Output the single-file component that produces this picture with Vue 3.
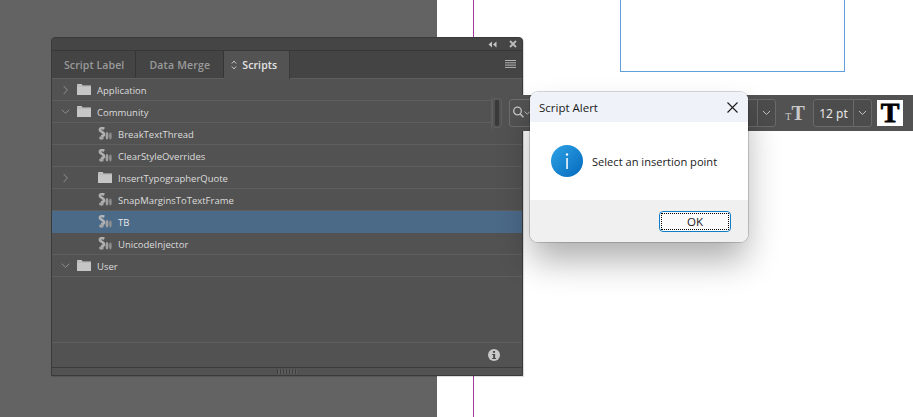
<script setup>
const rows = [
  { label: 'Application', kind: 'folder', depth: 0, caret: 'right' },
  { label: 'Community', kind: 'folder', depth: 0, caret: 'down' },
  { label: 'BreakTextThread', kind: 'script', depth: 1 },
  { label: 'ClearStyleOverrides', kind: 'script', depth: 1 },
  { label: 'InsertTypographerQuote', kind: 'folder', depth: 1, caret: 'right' },
  { label: 'SnapMarginsToTextFrame', kind: 'script', depth: 1 },
  { label: 'TB', kind: 'script', depth: 1, selected: true },
  { label: 'UnicodeInjector', kind: 'script', depth: 1 },
  { label: 'User', kind: 'folder', depth: 0, caret: 'down' }
]
</script>

<template>
  <div class="desk">
    <div class="pasteboard"></div>
    <div class="page">
      <div class="guide"></div>
      <div class="frame"></div>
    </div>

    <section class="panel">
      <header class="titlebar">
        <svg width="9" height="7" viewBox="0 0 9 7"><path d="M4 .5v6L.5 3.500zM8.500 .5v6L5 3.500z" fill="#c4c4c4"/></svg>
        <svg class="close" width="8" height="8" viewBox="0 0 8 8"><path d="M1 1l6 6M7 1L1 7" stroke="#bcbcbc" stroke-width="1.800"/></svg>
      </header>
      <nav class="tabs">
        <div class="tab one">Script Label</div>
        <div class="tab two">Data Merge</div>
        <div class="tab active">
          <svg width="6" height="10" viewBox="0 0 6 10"><path d="M.8 3.600L3 1l2.200 2.600M.8 6.400L3 9l2.200-2.600" fill="none" stroke="#cfcfcf" stroke-width=".9"/></svg>
          Scripts
        </div>
        <svg class="menu" width="11" height="8" viewBox="0 0 11 8"><path d="M0 .5h11M0 2.800h11M0 5.100h11M0 7.400h11" stroke="#b4b4b4"/></svg>
      </nav>
      <div class="list">
        <div v-for="r in rows" :key="r.label" class="row" :class="{ selected: r.selected, nested: r.depth }">
          <span class="caret">
            <svg v-if="r.caret === 'right'" width="5" height="10" viewBox="0 0 5 10"><path d="M.7 1l3.600 4-3.600 4" fill="none" stroke="#8f8f8f"/></svg>
            <svg v-else-if="r.caret === 'down'" width="9" height="5" viewBox="0 0 9 5"><path d="M.7.7l3.800 3.600L8.300.7" fill="none" stroke="#8f8f8f"/></svg>
          </span>
          <svg v-if="r.kind === 'folder'" class="ico" width="14" height="11" viewBox="0 0 14 11"><path d="M0 1.200C0 .5.4 0 1 0h3.600l1 1.400H14V11H0z" fill="#c6c6c6"/><path d="M0 2.100h14" stroke="#a4a4a4" stroke-width=".6"/></svg>
          <svg v-else class="ico" width="14" height="13" viewBox="0 0 14 13"><path d="M6.400 1.600C3.800.6 1.600 1.200 1.900 3c.4 2 4.100 2 4.100 4.200 0 1.500-1.700 2-2.900 2.200" fill="none" stroke="#b8b8b8" stroke-width="2.600" opacity=".92"/><ellipse cx="3.400" cy="11" rx="2.400" ry="1.700" fill="#a6a6a6"/><ellipse cx="9" cy="8.700" rx="1.400" ry="3.700" fill="#a2a2a2"/><ellipse cx="12.400" cy="9" rx="1.300" ry="3.400" fill="#8f8f8f"/></svg>
          <span class="label">{{ r.label }}</span>
        </div>
      </div>
      <footer class="foot">
        <svg width="12" height="12" viewBox="0 0 12 12"><circle cx="6" cy="6" r="6" fill="#c8c8c8"/><rect x="5" y="2" width="2" height="1.800" fill="#4a4a4a"/><path d="M4.200 5h2.900v4h1v1H4.200V9h1V6h-1z" fill="#4a4a4a"/></svg>
      </footer>
      <div class="resize"><div class="dots"></div></div>
    </section>

    <div class="toolbar">
      <div class="grip-wrap"><div class="grip"></div></div>
      <div class="search">
        <svg width="20" height="16" viewBox="0 0 20 16"><circle cx="5.500" cy="6" r="3.800" fill="none" stroke="#c8c8c8" stroke-width="1.300"/><path d="M8 8.800l3.400 3.400" stroke="#c8c8c8" stroke-width="1.600"/><path d="M12.500 6.500l2.800 2.600 2.800-2.600" fill="none" stroke="#bdbdbd" stroke-width="1"/></svg>
      </div>
      <div class="spacer"></div>
      <div class="combo first"><span class="chev"><svg width="9" height="6" viewBox="0 0 9 6"><path d="M1 1l3.500 3.500L8 1" fill="none" stroke="#c4c4c4"/></svg></span></div>
      <div class="tt"><span class="small-t">T</span><span class="big-t">T</span></div>
      <div class="combo size"><span class="val">12 pt</span><span class="chev"><svg width="9" height="6" viewBox="0 0 9 6"><path d="M1 1l3.500 3.500L8 1" fill="none" stroke="#c4c4c4"/></svg></span></div>
      <div class="swatch">T</div>
    </div>

    <section class="dialog">
      <header class="dlg-title">
        <span>Script Alert</span>
        <svg width="11" height="11" viewBox="0 0 11 11"><path d="M.5.5l10 10M10.500.5l-10 10" stroke="#1c1c1c" stroke-width="1.100"/></svg>
      </header>
      <div class="dlg-body">
        <svg width="32" height="32" viewBox="0 0 32 32">
          <defs><linearGradient id="ig" x1="0" y1="0" x2="1" y2="1"><stop offset="0" stop-color="#2ea3e6"/><stop offset="1" stop-color="#0569bd"/></linearGradient></defs>
          <circle cx="16" cy="16" r="16" fill="url(#ig)"/>
          <rect x="15.300" y="13" width="1.500" height="11" fill="#fff"/>
          <circle cx="16" cy="9.500" r="1.200" fill="#fff"/>
        </svg>
        <span class="msg">Select an insertion point</span>
      </div>
      <footer class="dlg-foot">
        <div class="ok"><span class="ok-inner">OK</span></div>
      </footer>
    </section>
  </div>
</template>

<style>
html, body { margin: 0; background: #fff; overflow: hidden; }
</style>

<style scoped>
.desk { position: relative; width: 913px; height: 417px; overflow: hidden; display: flex; background: #fff; font-family: "Open Sans", "Noto Sans", sans-serif; }
.pasteboard { width: 437px; background: #636363; }
.page { flex: 1; position: relative; background: #fff; }
.guide { position: absolute; left: 36px; top: 0; bottom: 0; width: 1px; background: #a03a9c; }
.frame { position: absolute; left: 183px; top: -10px; width: 223px; height: 80px; border: 1px solid #5f9fdc; }

.toolbar { position: absolute; left: 491px; top: 95px; width: 422px; height: 36px; box-sizing: border-box; background: #525252; display: flex; align-items: center; border-radius: 4px 0 0 4px; box-shadow: inset 1px 0 0 #5c5c5c; }
.grip-wrap { width: 10px; height: 30px; margin-left: 1px; display: flex; justify-content: center; align-items: center; border: 1px solid #5f5f5f; border-radius: 3px; box-sizing: border-box; }
.grip { width: 4px; height: 26px; background: #393939; border-radius: 2px; }
.search { margin-left: 7px; width: 28px; height: 28px; border: 1px solid #6e6e6e; border-radius: 3px; box-sizing: border-box; display: flex; align-items: center; padding-left: 2px; }
.spacer { flex: 1; }
.combo { height: 28px; border: 1px solid #6a6a6a; border-radius: 3px; box-sizing: border-box; display: flex; align-items: center; background: #4c4c4c; }
.combo.first { width: 32px; justify-content: flex-end; margin-right: 9px; }
.chev { width: 18px; height: 100%; border-left: 1px solid #6a6a6a; display: flex; align-items: center; justify-content: center; box-sizing: border-box; }
.tt { width: 20px; display: flex; align-items: flex-end; justify-content: center; font-family: "Liberation Serif", serif; color: #c9c9c9; line-height: 1; margin-right: 8px; }
.small-t { font-size: 10px; margin-bottom: 1px; }
.big-t { font-size: 20px; font-weight: 700; }
.combo.size { width: 59px; margin-right: 5px; }
.val { flex: 1; text-align: center; color: #e6e6e6; font-size: 12px; font-family: "Noto Sans", sans-serif; }
.swatch { width: 26px; height: 26px; margin-right: 10px; background: #fff; color: #000; font: 900 28px/26px "Liberation Serif", serif; text-align: center; -webkit-text-stroke: .8px #000; }

.panel { position: absolute; left: 51px; top: 37px; width: 472px; height: 339px; box-sizing: border-box; background: #525252; border: 1px solid #3a3a3a; border-radius: 4px 4px 0 0; display: flex; flex-direction: column; box-shadow: 1px 1px 1px rgba(0,0,0,.15); }
.titlebar { height: 13px; flex: none; box-sizing: border-box; background: #454545; border-bottom: 1px solid #383838; display: flex; align-items: center; justify-content: flex-end; gap: 12px; padding-right: 5px; border-radius: 3px 3px 0 0; }
.tabs { height: 28px; flex: none; background: #444; display: flex; align-items: stretch; position: relative; border-bottom: 1px solid #5e5e5e; box-sizing: border-box; }
.tab { display: flex; align-items: center; gap: 5px; font-size: 10.500px; font-weight: 600; color: #9a9a9a; border-right: 1px solid #363636; letter-spacing: .1px; }
.tab.one { padding: 0 11px 0 12px; }
.tab.two { padding: 0 13px 0 13px; letter-spacing: .2px; }
.tab.active { background: #535353; color: #e4e4e4; padding: 0 12px 0 7px; border-right: 1px solid #3a3a3a; margin-bottom: -1px; }
.menu { position: absolute; right: 6px; top: 9px; }
.list { flex: 1; }
.row { height: 22px; display: flex; align-items: center; box-sizing: border-box; border-bottom: 1px solid #5e5e5e; color: #dcdcdc; font-size: 9.500px; }
.row.selected { background: #4b6a88; color: #e8e8e8; border-bottom-color: #4b6a88; }
.caret { width: 25px; flex: none; display: flex; justify-content: center; padding-left: 2px; box-sizing: border-box; }
.ico { flex: none; margin-right: 6px; }
.row.nested .ico { margin-left: 21px; }
.label { margin-top: 2px; }
.foot { height: 24px; flex: none; border-top: 1px solid #5e5e5e; border-bottom: 1px solid #3c3c3c; display: flex; align-items: center; justify-content: flex-end; padding-right: 22px; box-sizing: content-box; }
.resize { height: 7px; flex: none; display: flex; justify-content: center; align-items: center; }
.dots { width: 20px; height: 5px; background: repeating-linear-gradient(90deg, #3e3e3e 0 1px, #5c5c5c 1px 3px); }

.dialog { position: absolute; left: 530px; top: 92px; width: 218px; height: 150px; border-radius: 8px; background: #fff; box-shadow: 0 0 0 1px rgba(0,0,0,.16), 0 20px 34px -2px rgba(0,0,0,.32); overflow: hidden; display: flex; flex-direction: column; color: #1a1a1a; font-size: 11.500px; }
.dlg-title { height: 30px; flex: none; background: #eff3f9; display: flex; align-items: center; justify-content: space-between; padding: 0 10px 0 9px; }
.dlg-body { flex: 1; display: flex; align-items: center; gap: 9px; padding-left: 21px; }
.msg { font-size: 11.100px; }
.dlg-foot { height: 42px; flex: none; background: #f0f0f0; display: flex; align-items: center; justify-content: flex-end; padding-right: 17px; }
.ok { width: 72px; height: 21px; border: 1px solid #0f7ec4; border-radius: 4px; background: #fbfbfb; box-sizing: border-box; padding: 1px; display: flex; }
.ok-inner { flex: 1; border: 1px dotted #000; display: flex; align-items: center; justify-content: center; font-size: 11.500px; }
</style>
